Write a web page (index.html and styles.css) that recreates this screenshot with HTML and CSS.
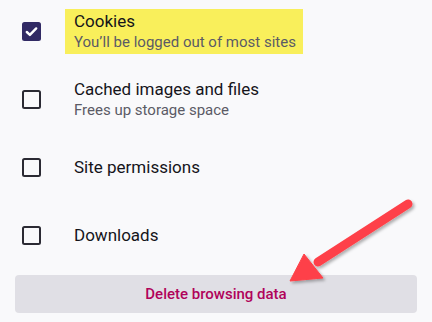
FILE: index.html
```html
<!DOCTYPE html>
<html lang="en">
<head>
  <meta charset="UTF-8">
  <meta name="viewport" content="width=device-width, initial-scale=1.0">
  <title>Delete browsing data</title>
  <link rel="stylesheet" href="styles.css">
</head>
<body>

  <div class="data-list">
    <div class="data-row">
      <span class="check checked">
        <svg viewBox="0 0 19 19" width="19" height="19"><path d="M4.8 10 L7.9 12.9 L14.2 6.4" fill="none" stroke="#fff" stroke-width="2.4" stroke-linecap="round" stroke-linejoin="round"/></svg>
      </span>
      <div class="row-text marked">
        <div class="row-title">Cookies</div>
        <div class="row-sub">You’ll be logged out of most sites</div>
      </div>
    </div>
    <div class="data-row">
      <span class="check"></span>
      <div class="row-text">
        <div class="row-title">Cached images and files</div>
        <div class="row-sub">Frees up storage space</div>
      </div>
    </div>
    <div class="data-row">
      <span class="check"></span>
      <div class="row-text">
        <div class="row-title">Site permissions</div>
      </div>
    </div>
    <div class="data-row">
      <span class="check"></span>
      <div class="row-text">
        <div class="row-title">Downloads</div>
      </div>
    </div>
  </div>

  <button class="delete-btn">Delete browsing data</button>

  <!-- annotation arrow -->
  <svg class="arrow" width="432" height="322" viewBox="0 0 432 322">
    <defs>
      <filter id="shadow" x="-20%" y="-20%" width="140%" height="140%">
        <feDropShadow dx="2" dy="2" stdDeviation="1.5" flood-color="#000" flood-opacity="0.3"/>
      </filter>
    </defs>
    <g filter="url(#shadow)" fill="#fe4148" stroke="#fe4148">
      <line x1="408" y1="204" x2="318" y2="262" stroke-width="9" stroke-linecap="round"/>
      <polygon points="290,281 304,254 323,278" stroke-width="1" stroke-linejoin="round"/>
    </g>
  </svg>

</body>
</html>
```

FILE: styles.css
```css
body {
  font-family: Roboto, "Noto Sans", sans-serif;
  margin: 0;
  padding: 0;
  background-color: #f9f9fb;
  width: 432px;
  height: 322px;
  overflow: hidden;
  position: relative;
}

.data-list {
  margin-top: -3px;
}

.data-row {
  display: flex;
  align-items: center;
  height: 68px;
  padding-left: 22px;
}

.check {
  box-sizing: border-box;
  width: 19px;
  height: 19px;
  border: 2.5px solid #2b2a33;
  border-radius: 2.5px;
  flex-shrink: 0;
  display: flex;
}

.check.checked {
  border: none;
  background: #312a64;
}

.row-text {
  margin-left: 33px;
}

.row-text.marked {
  background: #f9ef5b;
  margin-left: 24px;
  padding: 1px 7px 2px 9px;
}

.row-title {
  font-size: 17px;
  line-height: 22px;
  color: #15141a;
}

.row-sub {
  font-size: 15px;
  line-height: 20px;
  color: #5b5b66;
}

.delete-btn {
  display: block;
  box-sizing: border-box;
  margin: 6px 0 0 15px;
  width: 402px;
  height: 38px;
  border: none;
  border-radius: 4px;
  background: #e0dfe5;
  color: #b0035a;
  font-family: Roboto, "Noto Sans", sans-serif;
  font-size: 15px;
  font-weight: 500;
  padding: 0;
}

.arrow {
  position: absolute;
  left: 0;
  top: 0;
}
```
